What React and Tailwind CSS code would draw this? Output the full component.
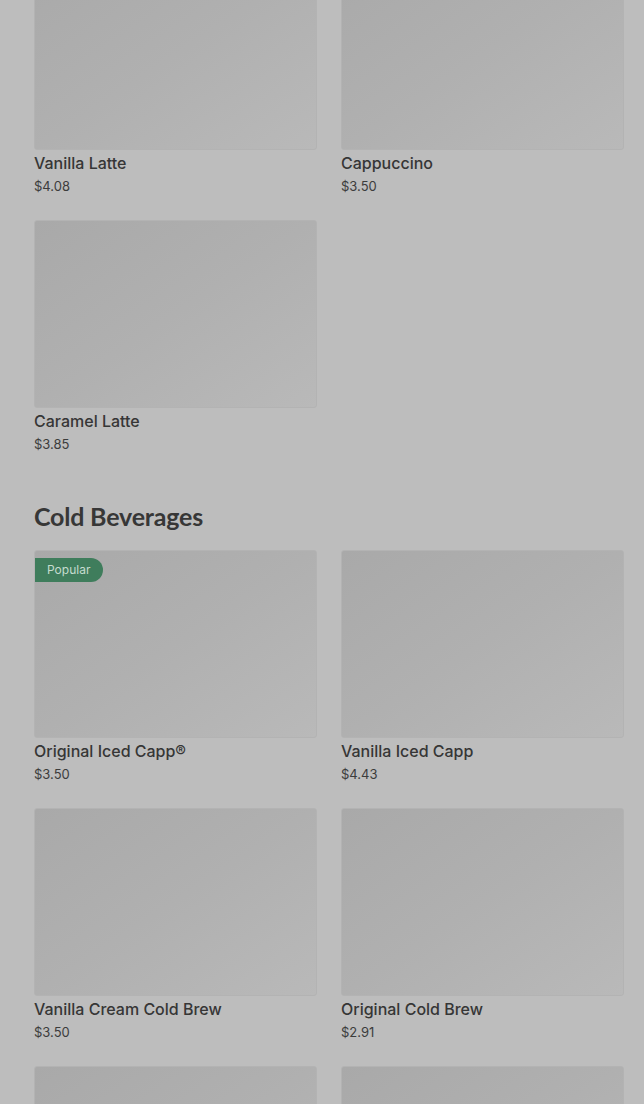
const hot = [
  { name: 'Vanilla Latte', price: '$4.08' },
  { name: 'Cappuccino', price: '$3.50' },
  { name: 'Caramel Latte', price: '$3.85' },
];

// last row is cut by the fold, only its pictures show
const cold = [
  { name: 'Original Iced Capp®', price: '$3.50', popular: true },
  { name: 'Vanilla Iced Capp', price: '$4.43' },
  { name: 'Vanilla Cream Cold Brew', price: '$3.50' },
  { name: 'Original Cold Brew', price: '$2.91' },
  { id: 'cold-5' },
  { id: 'cold-6' },
];

function ItemCard({ item }) {
  return (
    <div className="flex flex-col">
      <div className="relative h-[188px] rounded-[3px] border border-[#b3b3b3] bg-gradient-to-br from-[#a9a9a9] via-[#b0b0b0] to-[#b9b9b9]">
        {item.popular && (
          <span className="absolute left-0 top-[7px] h-6 pl-3 pr-[13px] rounded-r-full bg-[#3f7d5c] text-[#c6dccf] text-[12px] leading-6">
            Popular
          </span>
        )}
      </div>
      {item.name && (
        <>
          <p className="mt-[1px] text-[16px] leading-6 font-medium text-[#363636]">{item.name}</p>
          <p className="mt-px text-[13px] leading-[21px] text-[#3c3c3c]">{item.price}</p>
        </>
      )}
    </div>
  );
}

export default function App() {
  return (
    <div className="h-[1104px] overflow-hidden bg-[#bdbdbd] pl-[34px] pr-[20px]" style={{ fontFamily: 'Inter, Roboto, "Liberation Sans", sans-serif' }}>
      {/* Hot beverages (scrolled) */}
      <div className="-mt-[38px] grid grid-cols-2 gap-x-6 gap-y-[23px]">
        {hot.map((item) => (
          <ItemCard key={item.name} item={item} />
        ))}
      </div>

      {/* Cold beverages */}
      <h2 className="mt-[45px] mb-[18px] text-[25px] leading-8 font-bold text-[#373737] tracking-[-0.2px]" style={{ fontFamily: 'Lato, "Open Sans", sans-serif' }}>
        Cold Beverages
      </h2>
      <div className="grid grid-cols-2 gap-x-6 gap-y-[23px]">
        {cold.map((item) => (
          <ItemCard key={item.name || item.id} item={item} />
        ))}
      </div>
    </div>
  );
}
